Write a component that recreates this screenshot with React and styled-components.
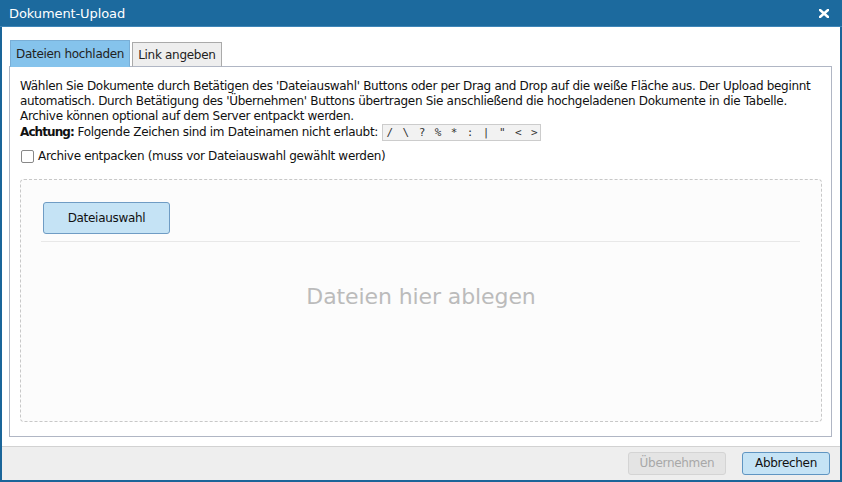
import React, { useState } from "react";
import styled, { createGlobalStyle } from "styled-components";

const GlobalStyle = createGlobalStyle`
  html, body {
    margin: 0;
    padding: 0;
    background: #ffffff;
  }
  * { box-sizing: border-box; }
`;

const FONT = `"DejaVu Sans", Verdana, sans-serif`;

export default function App() {
  const [unpack, setUnpack] = useState(false);
  const [tab, setTab] = useState(0);

  return (
    <>
      <GlobalStyle />
      <Dialog>
        <TitleBar>
          <Title>Dokument-Upload</Title>
          <CloseBtn aria-label="Schließen">
            <svg width="10" height="9" viewBox="0 0 10 9">
              <path d="M1 1 L9 8 M9 1 L1 8" stroke="#fff" strokeWidth="2.6" strokeLinecap="square" />
            </svg>
          </CloseBtn>
        </TitleBar>

        <Body>
          <Tabs>
            <Tab active={tab === 0} onClick={() => setTab(0)}>Dateien hochladen</Tab>
            <Tab active={tab === 1} onClick={() => setTab(1)}>Link angeben</Tab>
          </Tabs>
          <Panel>
            <Info>
              Wählen Sie Dokumente durch Betätigen des 'Dateiauswahl' Buttons oder per Drag and Drop auf die weiße Fläche aus. Der Upload beginnt automatisch. Durch Betätigung des 'Übernehmen' Buttons übertragen Sie anschließend die hochgeladenen Dokumente in die Tabelle. Archive können optional auf dem Server entpackt werden.
              <br />
              <b>Achtung:</b> Folgende Zeichen sind im Dateinamen nicht erlaubt: <Chars>/ \ ? % * : | " &lt; &gt;</Chars>
            </Info>
            <CheckRow>
              <Check type="checkbox" checked={unpack} onChange={(e) => setUnpack(e.target.checked)} />
              Archive entpacken (muss vor Dateiauswahl gewählt werden)
            </CheckRow>
            <DropZone>
              <DropHeader>
                <PickButton>Dateiauswahl</PickButton>
              </DropHeader>
              <DropHint>Dateien hier ablegen</DropHint>
            </DropZone>
          </Panel>
        </Body>

        <Footer>
          <FooterButton disabled>Übernehmen</FooterButton>
          <FooterButton primary>Abbrechen</FooterButton>
        </Footer>
      </Dialog>
    </>
  );
}

const Dialog = styled.div`
  width: 842px;
  height: 482px;
  display: flex;
  flex-direction: column;
  border: 2px solid #1a6599;
  border-top: none;
  background: #fff;
  font-family: ${FONT};
  color: #111;
`;

const TitleBar = styled.div`
  height: 27px;
  margin: 0 -2px;
  padding: 0 13px 0 9px;
  display: flex;
  align-items: center;
  justify-content: space-between;
  background: #1c6a9e;
  border-bottom: 1px solid #3f86b8;
`;

const Title = styled.div`
  color: #fff;
  font-size: 13px;
  letter-spacing: -0.1px;
`;

const CloseBtn = styled.div`
  display: flex;
  align-items: center;
  cursor: pointer;
`;

const Body = styled.div`
  flex: 1;
  display: flex;
  flex-direction: column;
  padding: 13px 8px 9px 7px;
`;

const Tabs = styled.div`
  display: flex;
  gap: 2px;
  padding-left: 1px;
  margin-bottom: -1px;
  position: relative;
  z-index: 1;
`;

const Tab = styled.div`
  padding: 0 5px;
  display: flex;
  align-items: center;
  font-size: 12px;
  letter-spacing: -0.3px;
  color: #222;
  cursor: pointer;
  border: 1px solid ${(p) => (p.active ? "#79aed6" : "#aaaaaa")};
  border-bottom: 1px solid ${(p) => (p.active ? "#85c3ec" : "#b0b6c4")};
  background: ${(p) => (p.active ? "#85c3ec" : "#eeeeee")};
  margin-top: ${(p) => (p.active ? "0" : "2px")};
  height: ${(p) => (p.active ? "27px" : "25px")};
`;

const Panel = styled.div`
  flex: 1;
  display: flex;
  flex-direction: column;
  border: 1px solid #b0b6c4;
  padding: 12px 9px 14px 10px;
`;

const Info = styled.div`
  font-size: 12px;
  line-height: 15px;
  letter-spacing: -0.31px;
  b {
    font-weight: bold;
    letter-spacing: -0.9px;
  }
`;

const Chars = styled.span`
  display: inline-block;
  font-family: "DejaVu Sans Mono", "Liberation Mono", monospace;
  font-size: 11px;
  line-height: 15px;
  letter-spacing: 1.4px;
  padding: 0 1px 0 4px;
  background: #f2f2f2;
  border: 1px solid #cccccc;
  color: #333;
`;

const CheckRow = styled.label`
  display: flex;
  align-items: center;
  gap: 4px;
  margin-top: 8px;
  font-size: 12px;
  letter-spacing: -0.31px;
  cursor: pointer;
`;

const Check = styled.input`
  appearance: none;
  width: 13px;
  height: 13px;
  margin: 0 0 0 1px;
  border: 1px solid #888;
  border-radius: 2px;
  background: #fff;
  &:checked {
    background: #85c3ec;
  }
`;

const DropZone = styled.div`
  flex: 1;
  margin-top: 16px;
  display: flex;
  flex-direction: column;
  border: 1px dashed #c8c8c8;
  border-radius: 4px;
  background: #fcfcfc;
`;

const DropHeader = styled.div`
  margin: 0 21px 0 20px;
  padding: 22px 0 7px 2px;
  border-bottom: 1px solid #e8e8e8;
`;

const PickButton = styled.button`
  width: 127px;
  height: 32px;
  font-family: ${FONT};
  font-size: 12px;
  letter-spacing: -0.3px;
  color: #111;
  background: #c5e3f5;
  border: 1px solid #6f9cc4;
  border-radius: 3px;
  cursor: pointer;
`;

const DropHint = styled.div`
  margin-top: 42px;
  text-align: center;
  font-size: 22px;
  line-height: 26px;
  color: #bbbbbb;
  letter-spacing: -0.1px;
`;

const Footer = styled.div`
  height: 34px;
  display: flex;
  justify-content: flex-end;
  align-items: center;
  gap: 16px;
  padding: 0 10px 1px;
  background: #eeeeee;
  border-top: 1px solid #d2d2d2;
`;

const FooterButton = styled.button`
  height: 23px;
  padding: 0 ${(p) => (p.primary ? "12px" : "10px")};
  min-width: ${(p) => (p.primary ? "88px" : "98px")};
  font-family: ${FONT};
  font-size: 12px;
  letter-spacing: -0.3px;
  border-radius: 3px;
  color: ${(p) => (p.disabled ? "#a8a8a8" : "#111")};
  background: ${(p) => (p.disabled ? "#e4e4e4" : "#c5e3f5")};
  border: 1px solid ${(p) => (p.disabled ? "#d4d4d4" : "#5f95c2")};
  cursor: ${(p) => (p.disabled ? "default" : "pointer")};
`;
